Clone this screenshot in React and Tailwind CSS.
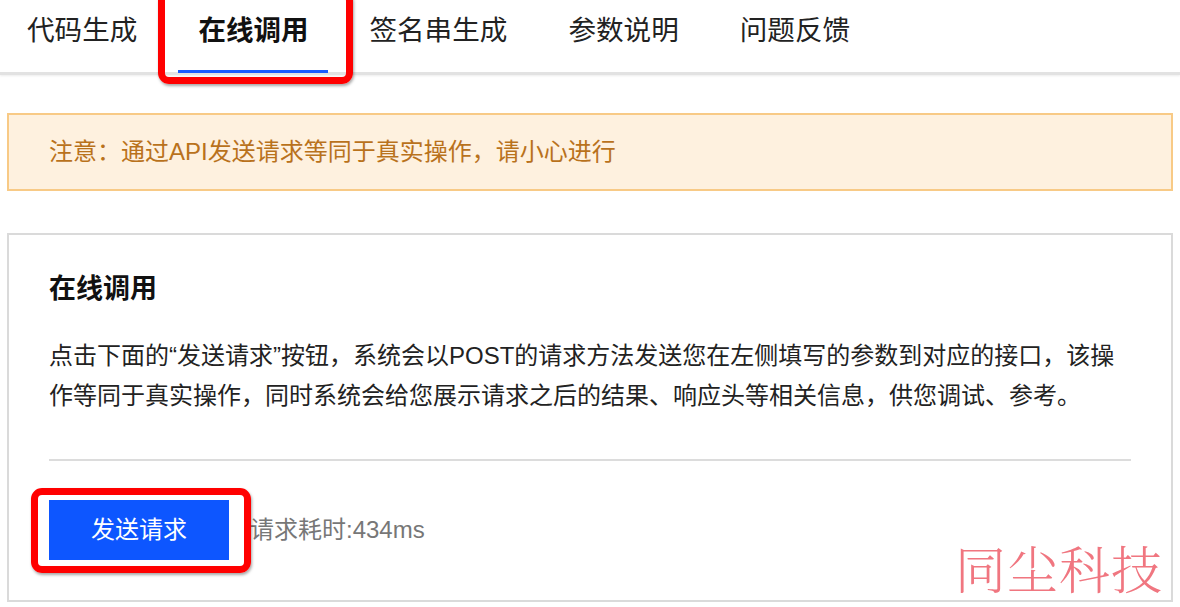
const tabs = ["代码生成", "在线调用", "签名串生成", "参数说明", "问题反馈"];

const font = { fontFamily: '"Liberation Sans", "Noto Sans CJK SC", sans-serif' };

export default function App() {
  return (
    <div className="relative w-[1180px] h-[607px] overflow-hidden bg-white" style={font}>
      {/* tabs */}
      <div className="h-[75px] border-b-[3px] border-[#e2e2e2] shadow-[0_1px_2px_rgba(0,0,0,0.08)] flex pl-[7px] gap-[21px]">
        {tabs.map((t, i) => (
          <div key={t} className="relative px-[20px] pt-[11px]">
            <span
              className={
                i === 1
                  ? "text-[27.5px] leading-[40px] font-bold text-[#111]"
                  : "text-[27.6px] leading-[40px] text-[#222]"
              }
            >
              {t}
            </span>
            {i === 1 && (
              <>
                <div className="absolute left-0 right-0 bottom-[-1px] h-[3px] bg-[#1a5cff]" />
                <div className="absolute left-[-20px] top-[-10px] w-[195px] h-[94px] border-[7px] border-[#ff0000] rounded-[11px] shadow-[1px_2px_3px_rgba(0,0,0,0.35)]" />
              </>
            )}
          </div>
        ))}
      </div>

      {/* notice */}
      <div className="mx-[7px] mt-[38px] h-[78px] border-2 border-[#f8ca86] bg-[#fef1df] flex items-center pl-[40px]">
        <span className="text-[24px] text-[#b9721c]">注意：通过API发送请求等同于真实操作，请小心进行</span>
      </div>

      {/* card */}
      <div className="mx-[7px] mt-[42px] border-2 border-[#dadada] px-[40px] pt-[34px] pb-[40px]">
        <div className="text-[27px] leading-[40px] font-bold text-[#111]">在线调用</div>
        <p className="mt-[27px] text-[24px] leading-[40px] text-[#222] pr-[10px]">
          点击下面的“发送请求”按钮，系统会以POST的请求方法发送您在左侧填写的参数到对应的接口，该操作等同于真实操作，同时系统会给您展示请求之后的结果、响应头等相关信息，供您调试、参考。
        </p>
        <div className="mt-[43px] h-[2px] bg-[#dcdcdc]" />
        <div className="mt-[39px] flex items-center gap-[21px]">
          <div className="relative">
            <button className="w-[180px] h-[60px] bg-[#0d56ff] text-white text-[24px]">发送请求</button>
            <div className="absolute left-[-18px] top-[-12px] w-[220px] h-[85px] border-[7px] border-[#ff0000] rounded-[11px] shadow-[1px_2px_3px_rgba(0,0,0,0.35)]" />
          </div>
          <span className="text-[24px] text-[#777]">请求耗时:434ms</span>
        </div>
      </div>

      {/* watermark */}
      <div
        className="absolute left-[955px] top-[532px] text-[51px] leading-[70px] font-light text-[#f07680] tracking-[1px]"
        style={{ fontFamily: '"Noto Serif CJK SC", "Noto Sans CJK SC", serif' }}
      >
        同尘科技
      </div>
    </div>
  );
}
